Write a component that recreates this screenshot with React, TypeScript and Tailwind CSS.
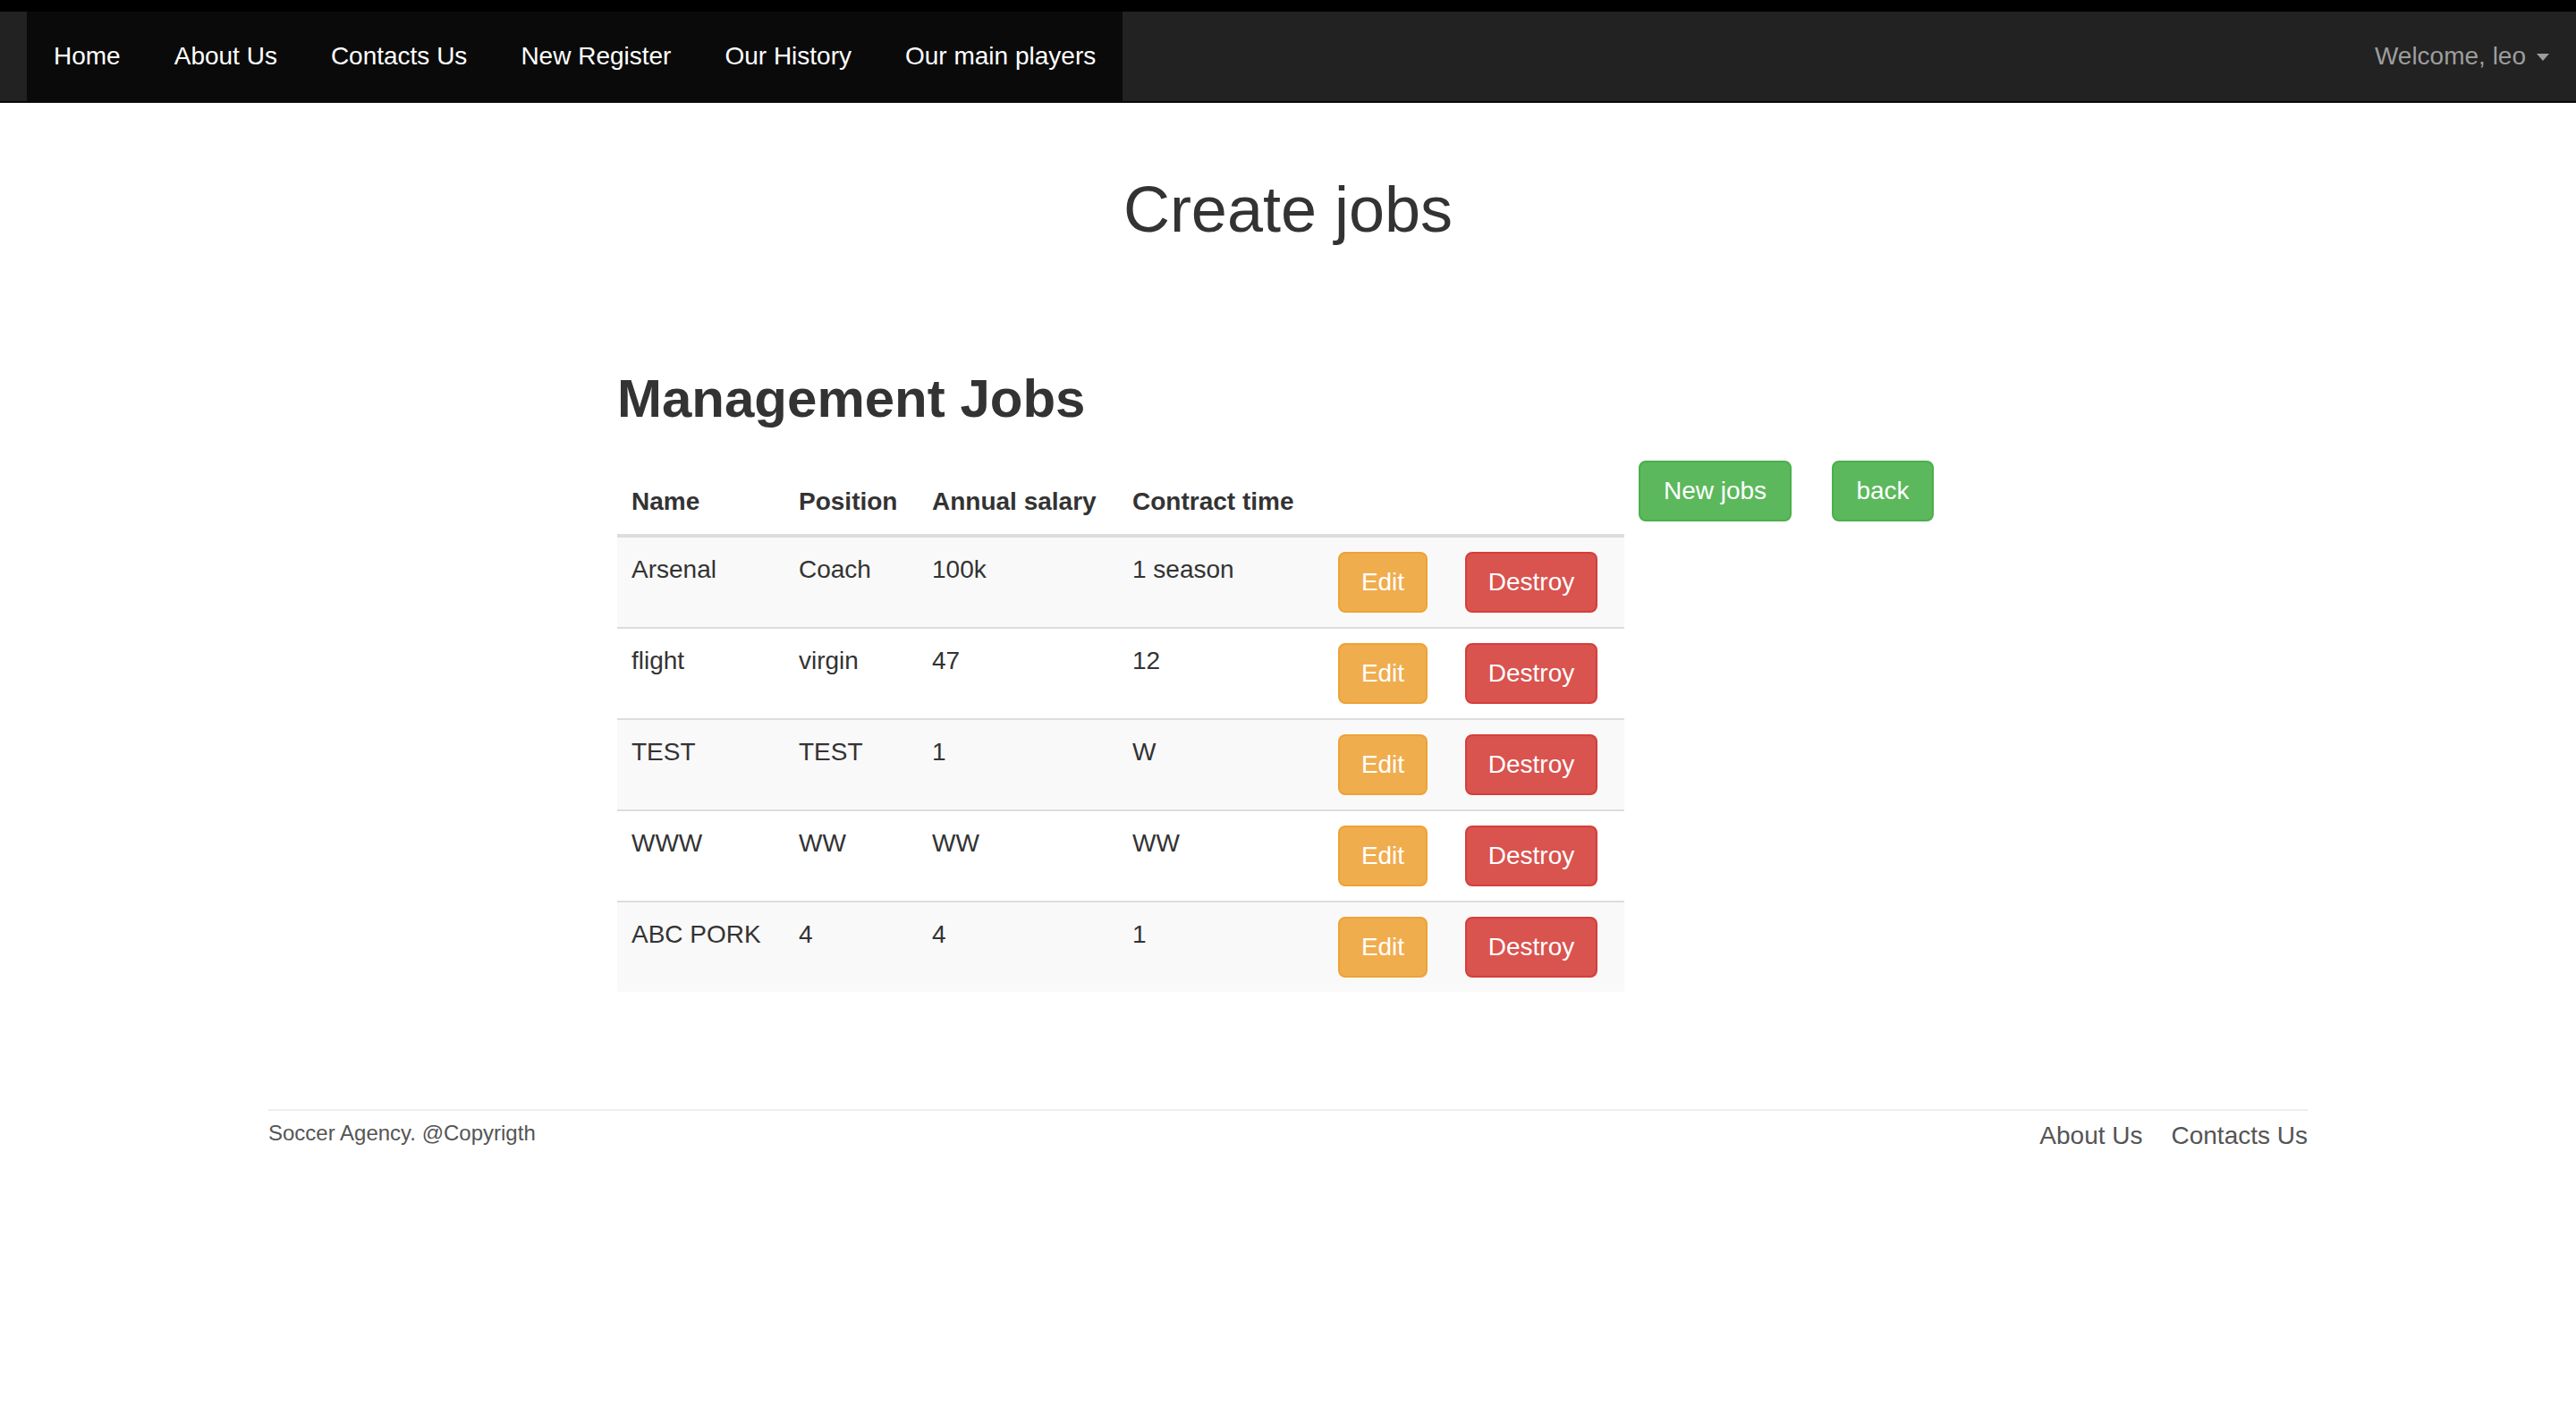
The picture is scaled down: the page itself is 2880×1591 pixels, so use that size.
import React from "react";

const navLinks = [
  "Home",
  "About Us",
  "Contacts Us",
  "New Register",
  "Our History",
  "Our main players",
];

interface Job {
  name: string;
  position: string;
  salary: string;
  contract: string;
}

const jobs: Job[] = [
  { name: "Arsenal", position: "Coach", salary: "100k", contract: "1 season" },
  { name: "flight", position: "virgin", salary: "47", contract: "12" },
  { name: "TEST", position: "TEST", salary: "1", contract: "W" },
  { name: "WWW", position: "WW", salary: "WW", contract: "WW" },
  { name: "ABC PORK", position: "4", salary: "4", contract: "1" },
];

function Navbar() {
  return (
    <div>
      <div className="h-[13px] bg-black" />
      <nav className="flex h-[102px] items-stretch justify-between border-b-2 border-[#080808] bg-[#222]">
        <ul className="ml-[30px] flex bg-[#0a0a0a]">
          {navLinks.map((link) => (
            <li key={link}>
              <a
                href="#"
                className="block px-[30px] py-[30px] text-[28px] leading-[40px] text-white"
              >
                {link}
              </a>
            </li>
          ))}
        </ul>
        <a
          href="#"
          className="flex items-center py-[30px] pr-[30px] text-[28px] leading-[40px] text-[#9d9d9d]"
        >
          Welcome, leo
          <span className="ml-[12px] mt-[2px] h-0 w-0 border-x-[7px] border-t-[8px] border-x-transparent border-t-[#9d9d9d]" />
        </a>
      </nav>
    </div>
  );
}

function Btn({
  label,
  width,
  color,
}: {
  label: string;
  width: string;
  color: "warning" | "danger" | "success";
}) {
  const colors = {
    warning: "bg-[#f0ad4e] border-[#eea236]",
    danger: "bg-[#d9534f] border-[#d43f3a]",
    success: "bg-[#5cb85c] border-[#4cae4c]",
  };
  return (
    <a
      href="#"
      className={`${width} ${colors[color]} block rounded-[8px] border-2 py-[12px] text-center text-[28px] leading-[40px] text-white`}
    >
      {label}
    </a>
  );
}

function JobsTable() {
  return (
    <table className="w-[1126px] table-fixed border-collapse text-left text-[28px] leading-[40px] text-[#333]">
      <colgroup>
        <col className="w-[187px]" />
        <col className="w-[149px]" />
        <col className="w-[224px]" />
        <col className="w-[230px]" />
        <col className="w-[142px]" />
        <col className="w-[194px]" />
      </colgroup>
      <thead>
        <tr className="border-b-4 border-[#ddd]">
          <th className="p-[16px] align-bottom font-bold">Name</th>
          <th className="p-[16px] align-bottom font-bold">Position</th>
          <th className="p-[16px] align-bottom font-bold">Annual salary</th>
          <th className="p-[16px] align-bottom font-bold">Contract time</th>
          <th className="p-[16px]" />
          <th className="p-[16px]" />
        </tr>
      </thead>
      <tbody>
        {jobs.map((job, i) => (
          <tr
            key={job.name}
            className={`${i > 0 ? "border-t-2 border-[#ddd]" : ""} ${
              i % 2 === 0 ? "bg-[#f9f9f9]" : "bg-white"
            }`}
          >
            <td className="p-[16px] align-top">{job.name}</td>
            <td className="p-[16px] align-top">{job.position}</td>
            <td className="p-[16px] align-top">{job.salary}</td>
            <td className="p-[16px] align-top">{job.contract}</td>
            <td className="p-[16px] align-top">
              <Btn label="Edit" width="w-[100px]" color="warning" />
            </td>
            <td className="p-[16px] align-top">
              <Btn label="Destroy" width="w-[148px]" color="danger" />
            </td>
          </tr>
        ))}
      </tbody>
    </table>
  );
}

export default function App() {
  return (
    <div className="min-h-[1591px] bg-white font-['Liberation_Sans',Arial,sans-serif] text-[#333]">
      <Navbar />
      <div className="mx-auto w-[2340px] px-[30px]">
        <h1 className="mt-[80px] text-center text-[72px] font-normal leading-[79px]">
          Create jobs
        </h1>
        <div className="ml-[390px]">
          <h2 className="mt-[139px] text-[60px] font-bold leading-[66px]">
            Management Jobs
          </h2>
          <div className="mt-[36px] flex items-start">
            <div className="mt-[10px]">
              <JobsTable />
            </div>
            <div className="ml-[16px] flex gap-[45px]">
              <Btn label="New jobs" width="w-[171px]" color="success" />
              <Btn label="back" width="w-[114px]" color="success" />
            </div>
          </div>
        </div>
        <footer className="mt-[131px] flex items-start justify-between border-t-2 border-[#eee] pt-[8px]">
          <p className="text-[24px] leading-[34px] text-[#555]">
            Soccer Agency. @Copyrigth
          </p>
          <div className="flex gap-[32px] text-[28px] leading-[40px] text-[#555]">
            <a href="#">About Us</a>
            <a href="#">Contacts Us</a>
          </div>
        </footer>
      </div>
    </div>
  );
}
